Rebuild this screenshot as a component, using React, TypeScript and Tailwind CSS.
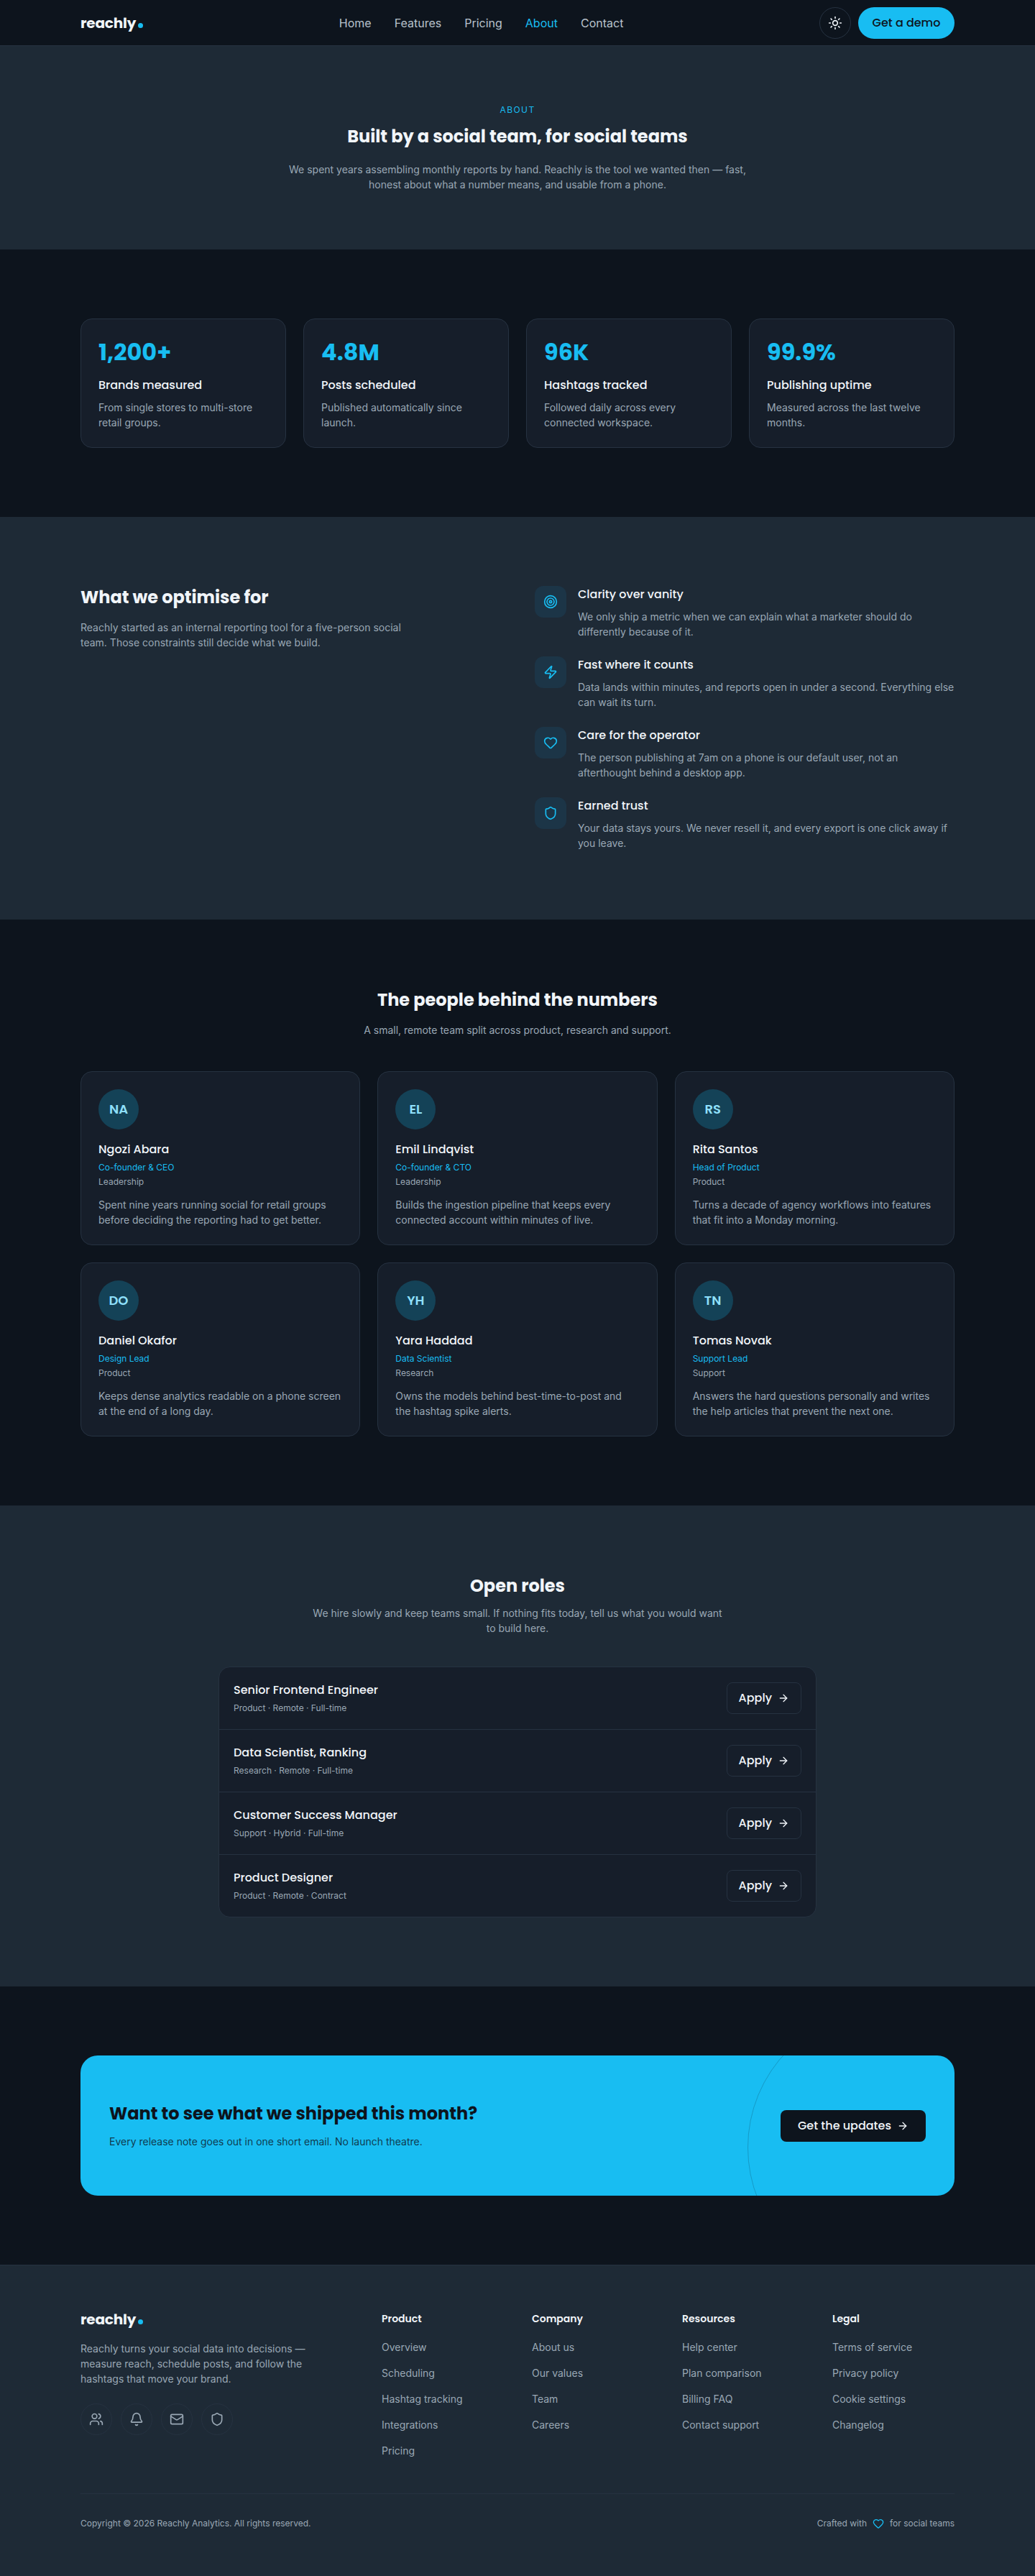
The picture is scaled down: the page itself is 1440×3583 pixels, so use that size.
import { ArrowRight, Bell, Heart, Mail, Shield, Sun, Target, Users, Zap } from 'lucide-react';

const stats = [
  { value: '1,200+', label: 'Brands measured', text: 'From single stores to multi-store retail groups.' },
  { value: '4.8M', label: 'Posts scheduled', text: 'Published automatically since launch.' },
  { value: '96K', label: 'Hashtags tracked', text: 'Followed daily across every connected workspace.' },
  { value: '99.9%', label: 'Publishing uptime', text: 'Measured across the last twelve months.' },
];

const values = [
  { icon: Target, title: 'Clarity over vanity', text: 'We only ship a metric when we can explain what a marketer should do differently because of it.' },
  { icon: Zap, title: 'Fast where it counts', text: 'Data lands within minutes, and reports open in under a second. Everything else can wait its turn.' },
  { icon: Heart, title: 'Care for the operator', text: 'The person publishing at 7am on a phone is our default user, not an afterthought behind a desktop app.' },
  { icon: Shield, title: 'Earned trust', text: 'Your data stays yours. We never resell it, and every export is one click away if you leave.' },
];

const team = [
  { initials: 'NA', name: 'Ngozi Abara', role: 'Co-founder & CEO', dept: 'Leadership', bio: 'Spent nine years running social for retail groups before deciding the reporting had to get better.' },
  { initials: 'EL', name: 'Emil Lindqvist', role: 'Co-founder & CTO', dept: 'Leadership', bio: 'Builds the ingestion pipeline that keeps every connected account within minutes of live.' },
  { initials: 'RS', name: 'Rita Santos', role: 'Head of Product', dept: 'Product', bio: 'Turns a decade of agency workflows into features that fit into a Monday morning.' },
  { initials: 'DO', name: 'Daniel Okafor', role: 'Design Lead', dept: 'Product', bio: 'Keeps dense analytics readable on a phone screen at the end of a long day.' },
  { initials: 'YH', name: 'Yara Haddad', role: 'Data Scientist', dept: 'Research', bio: 'Owns the models behind best-time-to-post and the hashtag spike alerts.' },
  { initials: 'TN', name: 'Tomas Novak', role: 'Support Lead', dept: 'Support', bio: 'Answers the hard questions personally and writes the help articles that prevent the next one.' },
];

const roles = [
  { title: 'Senior Frontend Engineer', meta: 'Product · Remote · Full-time' },
  { title: 'Data Scientist, Ranking', meta: 'Research · Remote · Full-time' },
  { title: 'Customer Success Manager', meta: 'Support · Hybrid · Full-time' },
  { title: 'Product Designer', meta: 'Product · Remote · Contract' },
];

const footerLinks = [
  { title: 'Product', links: ['Overview', 'Scheduling', 'Hashtag tracking', 'Integrations', 'Pricing'] },
  { title: 'Company', links: ['About us', 'Our values', 'Team', 'Careers'] },
  { title: 'Resources', links: ['Help center', 'Plan comparison', 'Billing FAQ', 'Contact support'] },
  { title: 'Legal', links: ['Terms of service', 'Privacy policy', 'Cookie settings', 'Changelog'] },
];

const heading = "font-['Poppins','Inter',sans-serif]";

function Logo() {
  return (
    <span className={`${heading} flex h-7 items-baseline text-xl leading-7 font-bold tracking-[-0.01em] text-[#f1f5f9]`}>
      reachly
      <span className="ml-[3px] inline-block h-[7px] w-[7px] rounded-full bg-[#18bdf2]" />
    </span>
  );
}

export default function App() {
  return (
    <div className="bg-[#0d141d] font-['Inter',sans-serif] text-[#f1f5f9]">
      <header className="h-16 border-b border-[#263241] bg-[#0d141d]">
        <div className="mx-auto flex h-full w-[1216px] items-center justify-between">
          <Logo />
          <nav className="flex gap-8 text-base text-[#b8c2cc]">
            <span>Home</span>
            <span>Features</span>
            <span>Pricing</span>
            <span className="text-[#18bdf2]">About</span>
            <span>Contact</span>
          </nav>
          <div className="flex items-center gap-2.5">
            <button className="flex h-11 w-11 items-center justify-center rounded-full border border-[#263241] text-[#f1f5f9]">
              <Sun size={20} />
            </button>
            <button className={`${heading} h-11 w-[134px] rounded-full bg-[#18bdf2] text-base font-medium text-[#0d141d]`}>
              Get a demo
            </button>
          </div>
        </div>
      </header>

      <section className="bg-[#1e2a36] pt-20 pb-20 text-center">
        <p className="text-xs leading-[18px] tracking-[0.12em] text-[#18bdf2]">ABOUT</p>
        <h1 className={`${heading} mt-3 text-2xl leading-[31px] font-bold`}>Built by a social team, for social teams</h1>
        <p className="mx-auto mt-5 w-[660px] text-sm leading-[21px] text-[#9aa8b5]">
          We spent years assembling monthly reports by hand. Reachly is the tool we wanted then — fast, honest about what a number means, and usable from a phone.
        </p>
      </section>

      <section className="py-24">
        <div className="mx-auto grid w-[1216px] grid-cols-4 gap-6">
          {stats.map((s) => (
            <div key={s.label} className="rounded-2xl border border-[#263241] bg-[#161e2a] p-6">
              <p className={`${heading} text-[32px] leading-[44px] font-bold text-[#18bdf2]`}>{s.value}</p>
              <p className={`${heading} mt-3 text-base leading-6 font-medium`}>{s.label}</p>
              <p className="mt-2 text-sm leading-[21px] text-[#9aa8b5]">{s.text}</p>
            </div>
          ))}
        </div>
      </section>

      <section className="bg-[#1e2a36] py-24">
        <div className="mx-auto grid w-[1216px] grid-cols-2 gap-12">
          <div>
            <h2 className={`${heading} text-2xl leading-[31px] font-bold`}>What we optimise for</h2>
            <p className="mt-4 max-w-md text-sm leading-[21px] text-[#9aa8b5]">
              Reachly started as an internal reporting tool for a five-person social team. Those constraints still decide what we build.
            </p>
          </div>
          <div className="flex flex-col gap-6">
            {values.map((v) => (
              <div key={v.title} className="flex gap-4">
                <div className="flex h-11 w-11 shrink-0 items-center justify-center rounded-xl bg-[#1c3547] text-[#18bdf2]">
                  <v.icon size={20} />
                </div>
                <div>
                  <h3 className={`${heading} text-base leading-6 font-medium`}>{v.title}</h3>
                  <p className="mt-2 text-sm leading-[21px] text-[#9aa8b5]">{v.text}</p>
                </div>
              </div>
            ))}
          </div>
        </div>
      </section>

      <section className="py-24">
        <div className="mx-auto w-[1216px]">
          <div className="text-center">
            <h2 className={`${heading} text-2xl leading-[31px] font-bold`}>The people behind the numbers</h2>
            <p className="mt-4 text-sm leading-[21px] text-[#9aa8b5]">A small, remote team split across product, research and support.</p>
          </div>
          <div className="mt-[47px] grid grid-cols-3 gap-6">
            {team.map((m) => (
              <div key={m.name} className="rounded-2xl border border-[#263241] bg-[#161e2a] p-6">
                <div className={`${heading} flex h-14 w-14 items-center justify-center rounded-full bg-[#144257] text-lg font-semibold text-[#8fe0fb]`}>
                  {m.initials}
                </div>
                <h3 className={`${heading} mt-4 text-base leading-6 font-medium`}>{m.name}</h3>
                <p className="mt-1 text-xs leading-[18px] text-[#18bdf2]">{m.role}</p>
                <p className="mt-0.5 text-xs leading-[18px] text-[#9aa8b5]">{m.dept}</p>
                <p className="mt-3 text-sm leading-[21px] text-[#9aa8b5]">{m.bio}</p>
              </div>
            ))}
          </div>
        </div>
      </section>

      <section className="bg-[#1e2a36] py-24">
        <div className="text-center">
          <h2 className={`${heading} text-2xl leading-[31px] font-bold`}>Open roles</h2>
          <p className="mx-auto mt-3 w-[576px] text-sm leading-[21px] text-[#9aa8b5]">
            We hire slowly and keep teams small. If nothing fits today, tell us what you would want to build here.
          </p>
        </div>
        <div className="mx-auto mt-[43px] w-[832px] overflow-hidden rounded-2xl border border-[#263241] bg-[#161e2a]">
          {roles.map((r) => (
            <div key={r.title} className="flex items-center justify-between border-b border-[#263241] px-5 py-5 last:border-b-0">
              <div>
                <h3 className={`${heading} text-base leading-6 font-medium`}>{r.title}</h3>
                <p className="mt-1 text-xs leading-[18px] text-[#9aa8b5]">{r.meta}</p>
              </div>
              <button className={`${heading} flex h-11 items-center gap-2 rounded-lg border border-[#263241] px-4 text-base font-medium`}>
                Apply
                <ArrowRight size={16} />
              </button>
            </div>
          ))}
        </div>
      </section>

      <section className="py-24">
        <div className="relative mx-auto flex h-[195px] w-[1216px] items-center justify-between overflow-hidden rounded-3xl bg-[#18bdf2] px-10">
          <div className="absolute -top-16 -right-24 h-96 w-96 rounded-full border border-[#0d141d]/20" />
          <div>
            <h2 className={`${heading} text-2xl leading-8 font-bold text-[#0d141d]`}>Want to see what we shipped this month?</h2>
            <p className="mt-3 text-sm leading-[21px] text-[#0d141d]/80">Every release note goes out in one short email. No launch theatre.</p>
          </div>
          <button className={`${heading} relative flex h-11 items-center gap-2 rounded-lg bg-[#0d141d] px-6 text-base font-medium`}>
            Get the updates
            <ArrowRight size={16} />
          </button>
        </div>
      </section>

      <footer className="border-t border-[#263241] bg-[#1e2a36] pt-[61px]">
        <div className="mx-auto w-[1216px]">
          <div className="grid grid-cols-[371px_161px_161px_161px_1fr] gap-12">
            <div>
              <Logo />
              <p className="mt-4 text-sm leading-[21px] text-[#9aa8b5]">
                Reachly turns your social data into decisions — measure reach, schedule posts, and follow the hashtags that move your brand.
              </p>
              <div className="mt-6 flex gap-3">
                {[Users, Bell, Mail, Shield].map((Icon, i) => (
                  <span key={i} className="flex h-11 w-11 items-center justify-center rounded-full border border-[#263241] text-[#9aa8b5]">
                    <Icon size={20} />
                  </span>
                ))}
              </div>
            </div>
            {footerLinks.map((col) => (
              <div key={col.title}>
                <h4 className={`${heading} text-sm leading-[26px] font-semibold`}>{col.title}</h4>
                <ul className="mt-4 flex flex-col gap-[15px] text-sm leading-[21px] text-[#9aa8b5]">
                  {col.links.map((l) => (
                    <li key={l}>{l}</li>
                  ))}
                </ul>
              </div>
            ))}
          </div>
          <div className="mt-[49px] flex items-center justify-between border-t border-[#263241] pt-8 pb-16 text-xs leading-[18px] text-[#9aa8b5]">
            <span>Copyright © 2026 Reachly Analytics. All rights reserved.</span>
            <span className="flex items-center gap-2">
              Crafted with <Heart size={16} className="text-[#18bdf2]" /> for social teams
            </span>
          </div>
        </div>
      </footer>
    </div>
  );
}
